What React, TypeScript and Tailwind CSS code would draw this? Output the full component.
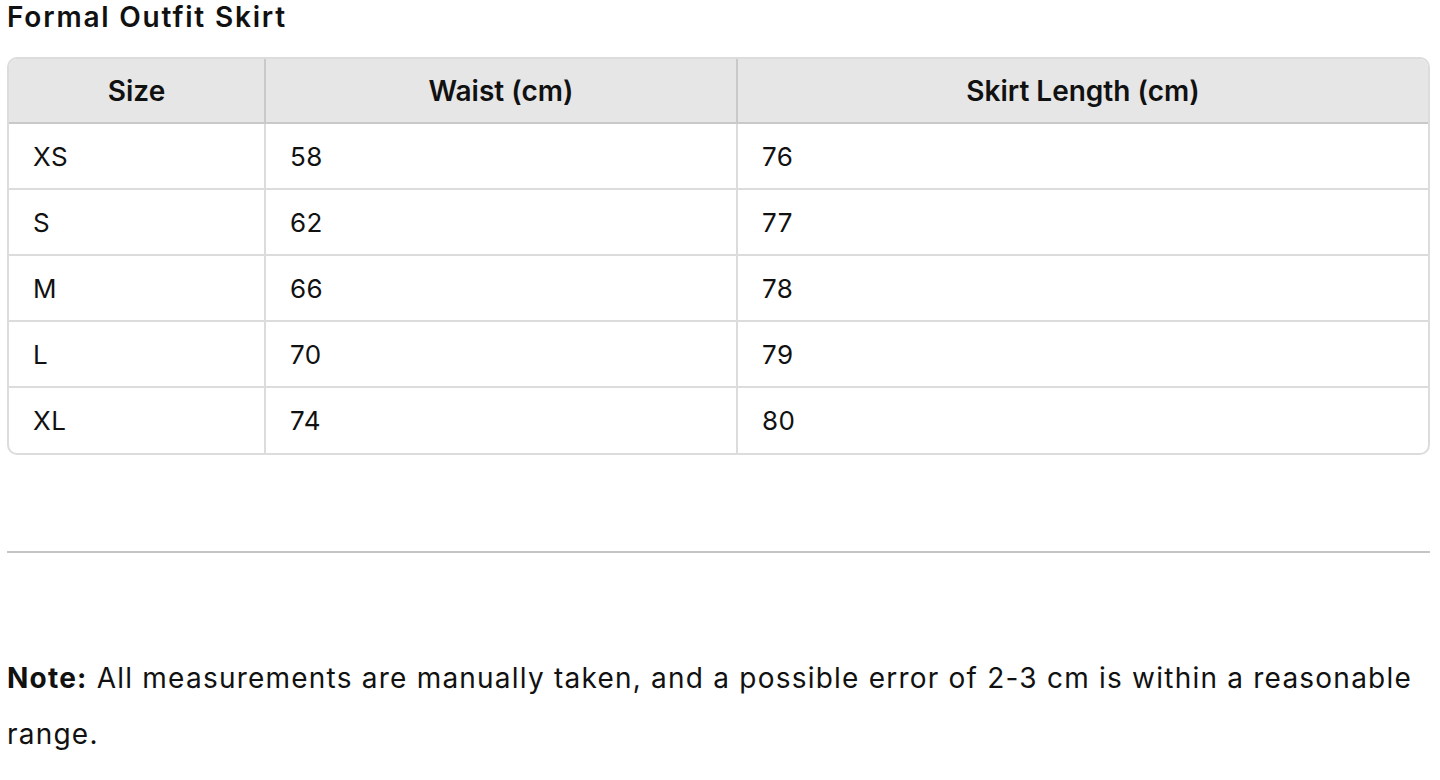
const rows = [
  ['XS', '58', '76'],
  ['S', '62', '77'],
  ['M', '66', '78'],
  ['L', '70', '79'],
  ['XL', '74', '80'],
];

export default function App() {
  return (
    <div className="bg-white text-[#111] pl-[7px] pr-[10px] font-['Inter','Liberation_Sans',sans-serif] text-[26px]">
      <h2 className="text-[28px] font-semibold leading-[34px] tracking-[1.8px]">Formal Outfit Skirt</h2>

      <div className="mt-[23px] border-2 border-[#dcdcdc] rounded-[10px] overflow-hidden">
        <table className="w-full border-collapse">
          <thead className="bg-[#e6e6e6] text-[28px]">
            <tr className="h-[64px] border-b-2 border-[#c9c9c9]">
              <th className="w-[256px] font-semibold text-center">Size</th>
              <th className="w-[472px] font-semibold text-center border-l-2 border-[#c9c9c9]">Waist (cm)</th>
              <th className="font-semibold text-center border-l-2 border-[#c9c9c9]">Skirt Length (cm)</th>
            </tr>
          </thead>
          <tbody className="tracking-[0.5px]">
            {rows.map((r, i) => (
              <tr key={r[0]} className={`h-[66px] ${i < rows.length - 1 ? 'border-b-2 border-[#dcdcdc]' : ''}`}>
                <td className="px-[24px]">{r[0]}</td>
                <td className="px-[24px] border-l-2 border-[#dcdcdc]">{r[1]}</td>
                <td className="px-[24px] border-l-2 border-[#dcdcdc]">{r[2]}</td>
              </tr>
            ))}
          </tbody>
        </table>
      </div>

      <hr className="mt-[96px] border-t-2 border-[#c4c4c4]" />

      <p className="mt-[97px] text-[28px] leading-[56px] tracking-[1.22px]">
        <span className="font-bold">Note:</span> All measurements are manually taken, and a possible error of 2-3 cm is within a reasonable range.
      </p>
    </div>
  );
}
